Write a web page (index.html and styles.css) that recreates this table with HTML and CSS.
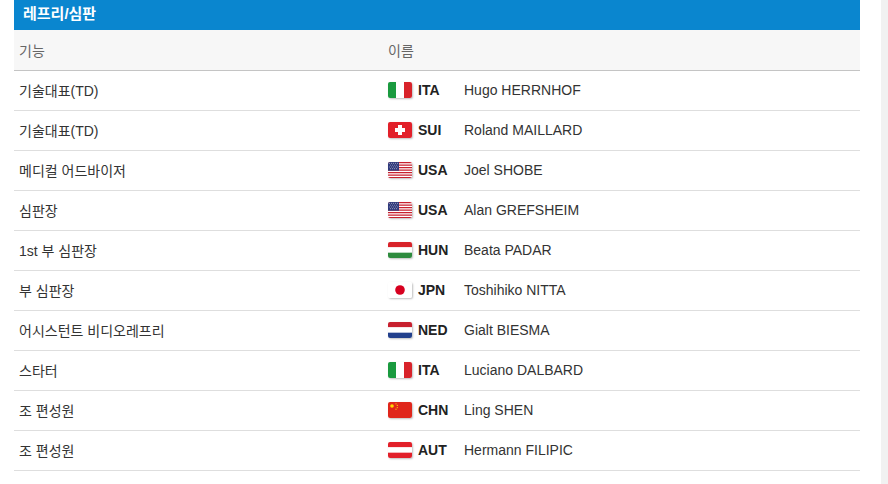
FILE: index.html
```html
<!DOCTYPE html>
<html lang="ko">
<head>
<meta charset="utf-8">
<title>레프리/심판</title>
<link rel="stylesheet" href="styles.css">
</head>
<body>
<div class="page">
  <main class="panel">
    <h2 class="panel-title">레프리/심판</h2>
    <table class="officials">
      <thead>
        <tr><th class="col-func">기능</th><th class="col-name">이름</th></tr>
      </thead>
      <tbody>
        <tr><td>기술대표(TD)</td><td><div class="who"><span class="flag">
          <svg viewBox="0 0 3 2" preserveAspectRatio="none"><rect width="1" height="2" fill="#1a9a3f"/><rect x="1" width="1" height="2" fill="#fff"/><rect x="2" width="1" height="2" fill="#d8232a"/></svg></span><b class="noc">ITA</b><span class="nm">Hugo HERRNHOF</span></div></td></tr>
        <tr><td>기술대표(TD)</td><td><div class="who"><span class="flag">
          <svg viewBox="0 0 24 16" preserveAspectRatio="none"><rect width="24" height="16" fill="#e2202a"/><rect x="10" y="3" width="4" height="10" fill="#fff"/><rect x="7" y="6" width="10" height="4" fill="#fff"/></svg></span><b class="noc">SUI</b><span class="nm">Roland MAILLARD</span></div></td></tr>
        <tr><td>메디컬 어드바이저</td><td><div class="who"><span class="flag">
          <svg viewBox="0 0 24 16" preserveAspectRatio="none"><rect width="24" height="16" fill="#fff"/><g fill="#c8202f"><rect y="0" width="24" height="1.25"/><rect y="2.5" width="24" height="1.25"/><rect y="5" width="24" height="1.25"/><rect y="7.5" width="24" height="1.25"/><rect y="10" width="24" height="1.25"/><rect y="12.5" width="24" height="1.25"/><rect y="15" width="24" height="1"/></g><rect width="11" height="8.7" fill="#2f3a7c"/><g fill="#fff"><circle cx="1.5" cy="1.3" r=".45"/><circle cx="3.5" cy="1.3" r=".45"/><circle cx="5.5" cy="1.3" r=".45"/><circle cx="7.5" cy="1.3" r=".45"/><circle cx="9.5" cy="1.3" r=".45"/><circle cx="2.5" cy="3.1" r=".45"/><circle cx="4.5" cy="3.1" r=".45"/><circle cx="6.5" cy="3.1" r=".45"/><circle cx="8.5" cy="3.1" r=".45"/><circle cx="1.5" cy="4.9" r=".45"/><circle cx="3.5" cy="4.9" r=".45"/><circle cx="5.5" cy="4.9" r=".45"/><circle cx="7.5" cy="4.9" r=".45"/><circle cx="9.5" cy="4.9" r=".45"/><circle cx="2.5" cy="6.7" r=".45"/><circle cx="4.5" cy="6.7" r=".45"/><circle cx="6.5" cy="6.7" r=".45"/><circle cx="8.5" cy="6.7" r=".45"/></g></svg></span><b class="noc">USA</b><span class="nm">Joel SHOBE</span></div></td></tr>
        <tr><td>심판장</td><td><div class="who"><span class="flag">
          <svg viewBox="0 0 24 16" preserveAspectRatio="none"><rect width="24" height="16" fill="#fff"/><g fill="#c8202f"><rect y="0" width="24" height="1.25"/><rect y="2.5" width="24" height="1.25"/><rect y="5" width="24" height="1.25"/><rect y="7.5" width="24" height="1.25"/><rect y="10" width="24" height="1.25"/><rect y="12.5" width="24" height="1.25"/><rect y="15" width="24" height="1"/></g><rect width="11" height="8.7" fill="#2f3a7c"/><g fill="#fff"><circle cx="1.5" cy="1.3" r=".45"/><circle cx="3.5" cy="1.3" r=".45"/><circle cx="5.5" cy="1.3" r=".45"/><circle cx="7.5" cy="1.3" r=".45"/><circle cx="9.5" cy="1.3" r=".45"/><circle cx="2.5" cy="3.1" r=".45"/><circle cx="4.5" cy="3.1" r=".45"/><circle cx="6.5" cy="3.1" r=".45"/><circle cx="8.5" cy="3.1" r=".45"/><circle cx="1.5" cy="4.9" r=".45"/><circle cx="3.5" cy="4.9" r=".45"/><circle cx="5.5" cy="4.9" r=".45"/><circle cx="7.5" cy="4.9" r=".45"/><circle cx="9.5" cy="4.9" r=".45"/><circle cx="2.5" cy="6.7" r=".45"/><circle cx="4.5" cy="6.7" r=".45"/><circle cx="6.5" cy="6.7" r=".45"/><circle cx="8.5" cy="6.7" r=".45"/></g></svg></span><b class="noc">USA</b><span class="nm">Alan GREFSHEIM</span></div></td></tr>
        <tr><td>1st 부 심판장</td><td><div class="who"><span class="flag">
          <svg viewBox="0 0 3 3" preserveAspectRatio="none"><rect width="3" height="1" fill="#d8232a"/><rect y="1" width="3" height="1" fill="#fff"/><rect y="2" width="3" height="1" fill="#2e8b3e"/></svg></span><b class="noc">HUN</b><span class="nm">Beata PADAR</span></div></td></tr>
        <tr><td>부 심판장</td><td><div class="who"><span class="flag">
          <svg viewBox="0 0 24 16" preserveAspectRatio="none"><rect width="24" height="16" fill="#fff"/><circle cx="12" cy="8" r="4.8" fill="#d7001f"/></svg></span><b class="noc">JPN</b><span class="nm">Toshihiko NITTA</span></div></td></tr>
        <tr><td>어시스턴트 비디오레프리</td><td><div class="who"><span class="flag">
          <svg viewBox="0 0 3 3" preserveAspectRatio="none"><rect width="3" height="1" fill="#c8202f"/><rect y="1" width="3" height="1" fill="#fff"/><rect y="2" width="3" height="1" fill="#22408c"/></svg></span><b class="noc">NED</b><span class="nm">Gialt BIESMA</span></div></td></tr>
        <tr><td>스타터</td><td><div class="who"><span class="flag">
          <svg viewBox="0 0 3 2" preserveAspectRatio="none"><rect width="1" height="2" fill="#1a9a3f"/><rect x="1" width="1" height="2" fill="#fff"/><rect x="2" width="1" height="2" fill="#d8232a"/></svg></span><b class="noc">ITA</b><span class="nm">Luciano DALBARD</span></div></td></tr>
        <tr><td>조 편성원</td><td><div class="who"><span class="flag">
          <svg viewBox="0 0 24 16" preserveAspectRatio="none"><rect width="24" height="16" fill="#e0261b"/><g fill="#ffd900"><circle cx="4" cy="4" r="1.8"/><circle cx="8" cy="1.8" r=".6"/><circle cx="9.3" cy="3.4" r=".6"/><circle cx="9.3" cy="5.6" r=".6"/><circle cx="8" cy="7.2" r=".6"/></g></svg></span><b class="noc">CHN</b><span class="nm">Ling SHEN</span></div></td></tr>
        <tr><td>조 편성원</td><td><div class="who"><span class="flag">
          <svg viewBox="0 0 3 3" preserveAspectRatio="none"><rect width="3" height="1" fill="#e2202a"/><rect y="1" width="3" height="1" fill="#fff"/><rect y="2" width="3" height="1" fill="#e2202a"/></svg></span><b class="noc">AUT</b><span class="nm">Hermann FILIPIC</span></div></td></tr>
      </tbody>
    </table>
  </main>
  <div class="scroll-track"></div>
</div>
</body>
</html>
```

FILE: styles.css
```css
html, body {
  margin: 0;
  padding: 0;
  background: #fff;
}
body {
  font-family: "Liberation Sans", Arial, "Noto Sans CJK KR", sans-serif;
  font-size: 14px;
  color: #333;
}
.page {
  display: flex;
  height: 484px;
  overflow: hidden;
}
.panel {
  flex: 1;
  padding: 0 21px 0 14px;
}
.scroll-track {
  width: 7px;
  background: #f1f1f1;
}
.panel-title {
  margin: 0;
  height: 30px;
  line-height: 28px;
  background: #0a86cf;
  color: #fff;
  font-size: 15px;
  font-weight: bold;
  padding-left: 9px;
  font-family: "Liberation Sans", "Noto Sans CJK KR", sans-serif;
}
.officials {
  width: 100%;
  border-collapse: collapse;
  table-layout: fixed;
}
.officials th {
  background: #f7f7f7;
  color: #666;
  font-weight: normal;
  text-align: left;
  height: 40px;
  padding: 0 5px;
  border-bottom: 1px solid #c4c4c4;
  font-size: 14px;
}
.officials th.col-func { width: 364px; }
.officials th.col-name { padding-left: 0; }
.officials td {
  height: 37px;
  padding: 0 5px 2px;
  border-bottom: 1px solid #dedede;
  font-size: 14px;
  vertical-align: middle;
}
.officials td + td { padding-left: 0; }
.who {
  display: flex;
  align-items: center;
}
.flag {
  display: inline-flex;
  width: 24px;
  height: 16px;
  border-radius: 2px;
  overflow: hidden;
  box-shadow: 1px 1px 2px rgba(0,0,0,0.25);
}
.flag svg {
  width: 24px;
  height: 16px;
  display: block;
}
.noc {
  width: 46px;
  padding-left: 6px;
  font-weight: bold;
  color: #222;
  font-size: 14px;
}
.nm {
  color: #333;
}
```
